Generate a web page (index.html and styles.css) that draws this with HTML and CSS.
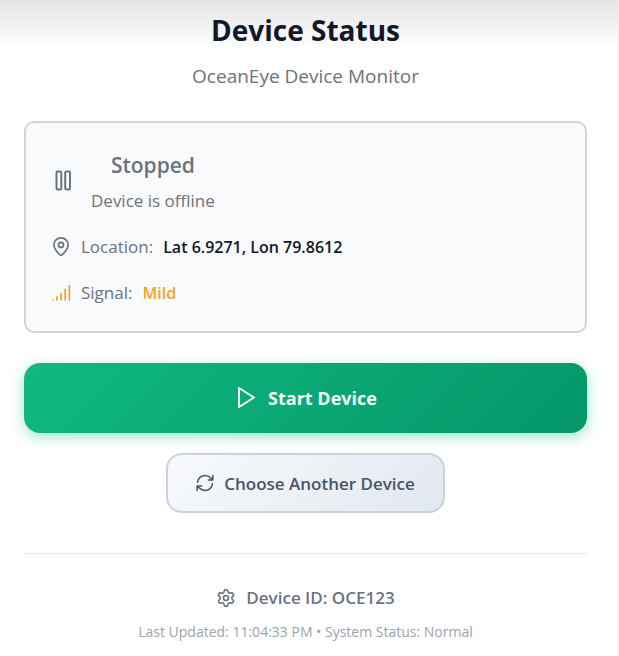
FILE: index.html
```html
<!DOCTYPE html>
<html lang="en">
<head>
<meta charset="utf-8">
<meta name="viewport" content="width=device-width, initial-scale=1">
<title>Device Status</title>
<link rel="stylesheet" href="styles.css">
</head>
<body>
<main class="panel">
  <header class="header">
    <h1 class="title">Device Status</h1>
    <p class="subtitle">OceanEye Device Monitor</p>
  </header>

  <section class="card">
    <div class="state">
      <svg class="icon icon-lg" viewBox="0 0 24 24" aria-hidden="true"><rect x="5.500" y="3.500" width="4.800" height="18" rx="1.200"/><rect x="14.200" y="3.500" width="4.800" height="18" rx="1.200"/></svg>
      <div class="state-text">
        <h2 class="state-name">Stopped</h2>
        <p class="state-note">Device is offline</p>
      </div>
    </div>
    <div class="row">
      <svg class="icon" viewBox="0 0 24 24" aria-hidden="true"><path d="M20.500 9.500c0 4.800-5.200 10-7.300 12a1.800 1.800 0 0 1-2.400 0C8.700 19.500 3.500 14.300 3.500 9.500a8.500 8.500 0 0 1 17 0Z"/><circle cx="12" cy="9.500" r="3"/></svg>
      <span class="label">Location:</span>
      <span class="value">Lat 6.9271, Lon 79.8612</span>
    </div>
    <div class="row">
      <svg class="icon icon-signal" viewBox="0 0 24 24" aria-hidden="true"><path d="M2 20.500h.01M7 20.500v-4M12 20.500v-8M17 20.500V8M22 20.500V3"/></svg>
      <span class="label">Signal:</span>
      <span class="value value-mild">Mild</span>
    </div>
  </section>

  <div class="actions">
    <button class="button button-start" type="button">
      <svg class="icon icon-lg" viewBox="0 0 24 24" aria-hidden="true"><path d="m5 2 15 9.500L5 21Z"/></svg>
      Start Device
    </button>
    <button class="button button-choose" type="button">
      <svg class="icon icon-sm" viewBox="0 0 24 24" aria-hidden="true"><path d="M2 11A10 10 0 0 1 12 2a10.500 10.500 0 0 1 7.500 3.200L22.500 8M22.500 2v6h-6M22 13a10 10 0 0 1-10 9 10.500 10.500 0 0 1-7.500-3.200L1.500 16M7.500 16h-6v6"/></svg>
      Choose Another Device
    </button>
  </div>

  <footer class="footer">
    <p class="device-id">
      <svg class="icon" viewBox="0 0 24 24" aria-hidden="true"><path d="M9.671 4.136a2.340 2.340 0 0 1 4.659 0 2.340 2.340 0 0 0 3.319 1.915 2.340 2.340 0 0 1 2.330 4.033 2.340 2.340 0 0 0 0 3.831 2.340 2.340 0 0 1-2.330 4.033 2.340 2.340 0 0 0-3.319 1.915 2.340 2.340 0 0 1-4.659 0 2.340 2.340 0 0 0-3.320-1.915 2.340 2.340 0 0 1-2.330-4.033 2.340 2.340 0 0 0 0-3.831A2.340 2.340 0 0 1 6.350 6.051a2.340 2.340 0 0 0 3.319-1.915"/><circle cx="12" cy="12" r="3"/></svg>
      Device ID: OCE123
    </p>
    <p class="updated">Last Updated: 11:04:33 PM • System Status: Normal</p>
  </footer>
</main>
</body>
</html>
```
FILE: styles.css
```css
* {
  box-sizing: border-box;
}

body,
h1,
h2,
p {
  margin: 0;
}

body {
  background: #fff;
  font-family: "Segoe UI", "Open Sans", "Noto Sans", sans-serif;
  color: #6b7280;
}

.panel {
  min-height: 100vh;
  padding: 10px 31px 10px 24px;
  border-right: 1px solid #ececef;
  background: linear-gradient(#e5e5e5, #fff 50px);
}

.header {
  margin-bottom: 31px;
  text-align: center;
}

.title {
  margin-bottom: 12px;
  font-size: 28px;
  line-height: 40px;
  font-weight: 700;
  color: #111827;
}

.subtitle {
  font-size: 19px;
  line-height: 28px;
}

.icon {
  flex: none;
  width: 20px;
  height: 20px;
  fill: none;
  stroke: currentColor;
  stroke-width: 2;
  stroke-linecap: round;
  stroke-linejoin: round;
}

.icon-lg {
  width: 24px;
  height: 24px;
}

.icon-sm {
  width: 18px;
  height: 18px;
}

.icon-signal {
  color: #f0a52b;
}

.card {
  display: flex;
  flex-direction: column;
  gap: 22px;
  margin-bottom: 30px;
  padding: 24px 26px 26px 25px;
  border: 2px solid #d1d5db;
  border-radius: 10px;
  background: #f9fafc;
}

.state {
  display: flex;
  align-items: center;
  gap: 16px;
}

.state-text {
  text-align: center;
}

.state-name {
  margin-bottom: 6px;
  font-size: 21px;
  line-height: 36px;
  font-weight: 600;
}

.state-note {
  font-size: 17px;
  line-height: 24px;
}

.row {
  display: flex;
  align-items: center;
  gap: 10px;
  font-size: 16px;
  line-height: 24px;
}

.label {
  font-size: 17px;
}

.value {
  font-weight: 600;
  color: #111827;
}

.value-mild {
  color: #f0a52b;
}

.actions {
  display: flex;
  flex-direction: column;
  align-items: center;
  gap: 20px;
  margin-bottom: 40px;
}

.button {
  display: flex;
  align-items: center;
  justify-content: center;
  gap: 10px;
  font-family: inherit;
  font-weight: 600;
  cursor: pointer;
}

.button-start {
  width: 100%;
  height: 70px;
  border: 0;
  border-radius: 16px;
  background: linear-gradient(135deg, #10b981, #059669);
  box-shadow: 0 4px 14px rgba(16, 185, 129, 0.4);
  font-size: 18px;
  font-weight: 700;
  color: #f5fffb;
}

.button-choose {
  height: 60px;
  padding: 0 28px;
  border: 2px solid #cbd2df;
  border-radius: 16px;
  background: linear-gradient(135deg, #f8fafc, #e2e8f0);
  font-size: 17px;
  color: #475569;
}

.footer {
  padding-top: 32px;
  border-top: 1px solid #e5e7eb;
  text-align: center;
}

.device-id {
  display: flex;
  align-items: center;
  justify-content: center;
  gap: 10px;
  margin-bottom: 12px;
  font-size: 17px;
  line-height: 24px;
  font-weight: 600;
}

.updated {
  font-size: 14px;
  line-height: 20px;
  color: #9ca3af;
}
```
